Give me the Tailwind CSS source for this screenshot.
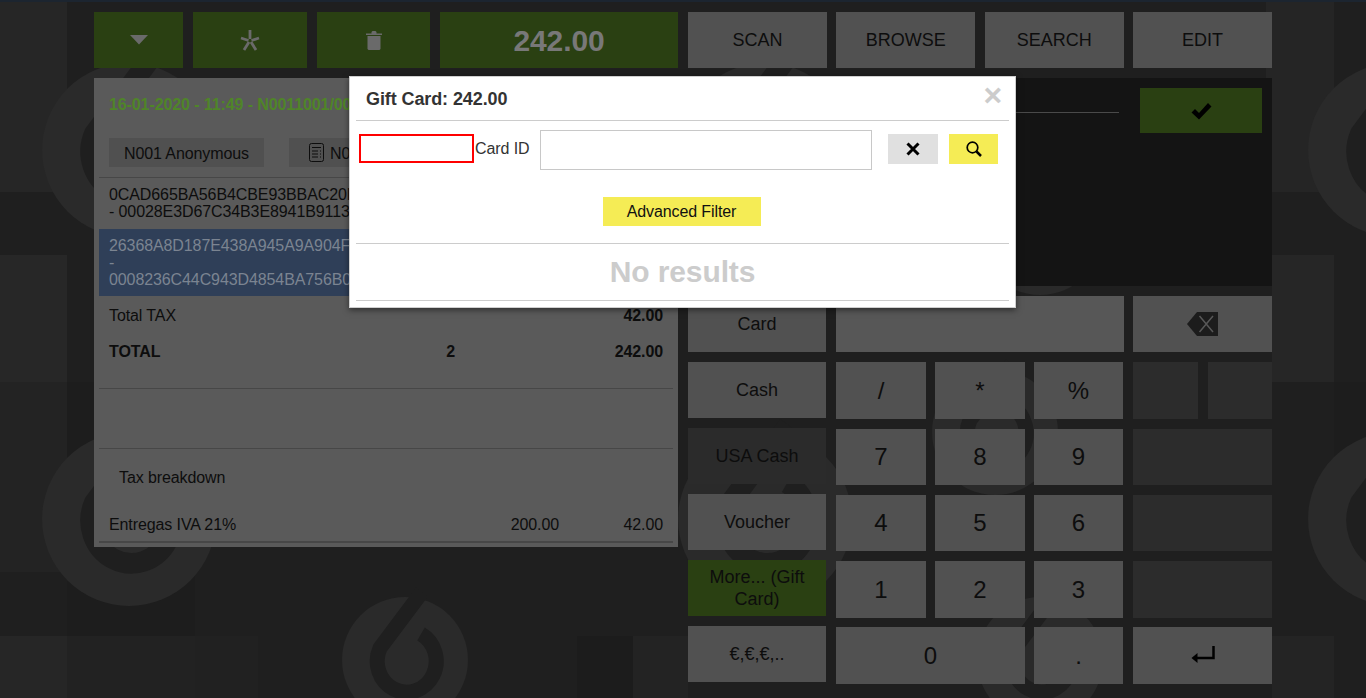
<!DOCTYPE html>
<html lang="en">
  <head>
    <meta charset="UTF-8" />
    <title>Gift Card</title>
    <script src="https://cdn.jsdelivr.net/npm/@tailwindcss/browser@4"></script>
  </head>
  <body class="bg-[#1f1f1f]">
    <div class="relative w-[1366px] h-[698px] overflow-hidden font-['Liberation_Sans',Arial,sans-serif] text-[16px] text-[#0d0d0d]">
      <!-- Background tiles and logos -->
      <svg class="absolute inset-0" width="1366" height="698" viewBox="0 0 1366 698">
        <defs>
          <g id="logo">
            <circle r="63" fill="#2a2a2a" />
            <path d="M17 -68 L-25 -12 A29.5 31 0 1 0 16 -26" fill="none" stroke="#1f1f1f" stroke-width="15" />
          </g>
        </defs>
        <rect width="1366" height="2" fill="#1c2530" />
        <rect x="0" y="2" width="67" height="190" fill="#262626" />
        <rect x="0" y="255" width="67" height="127" fill="#272727" />
        <rect x="0" y="382" width="67" height="190" fill="#232323" />
        <rect x="67" y="382" width="128" height="254" fill="#1d1d1d" />
        <rect x="0" y="636" width="67" height="62" fill="#262626" />
        <rect x="67" y="636" width="128" height="62" fill="#222222" />
        <rect x="195" y="636" width="63" height="62" fill="#212121" />
        <rect x="577" y="636" width="56" height="62" fill="#1c1c1c" />
        <rect x="633" y="636" width="55" height="62" fill="#232323" />
        <rect x="1266" y="2" width="68" height="190" fill="#252525" />
        <rect x="1272" y="255" width="62" height="127" fill="#262626" />
        <rect x="1334" y="382" width="32" height="190" fill="#1d1d1d" />
        <rect x="1272" y="636" width="62" height="62" fill="#242424" />
        <use href="#logo" transform="translate(129 150) scale(1.38)" />
        <use href="#logo" transform="translate(129 519) scale(1.38)" />
        <use href="#logo" transform="translate(765 150) scale(1.38)" />
        <use href="#logo" transform="translate(765 519) scale(1.38)" />
        <use href="#logo" transform="translate(1395 150) scale(1.38)" />
        <use href="#logo" transform="translate(1395 519) scale(1.38)" />
        <use href="#logo" transform="translate(405 660)" />
        <use href="#logo" transform="translate(1040 660)" />
        <use href="#logo" transform="translate(1040 232)" />
        <use href="#logo" transform="translate(995 432)" />
      </svg>

      <main class="relative flex gap-[10px] pl-[94px] pt-[12px]">
        <!-- Ticket column -->
        <section class="w-[584px] tracking-[-0.1px]">
          <div class="flex gap-[10px] h-[56px]">
            <button class="w-[89px] bg-[#2a4012] flex items-center justify-center">
              <svg width="18" height="10" viewBox="0 0 18 10"><path d="M0 0H18L9 9.500Z" fill="#6a6a6a" /></svg>
            </button>
            <button class="w-[114px] bg-[#2a4012] flex items-center justify-center">
              <svg width="20" height="21" viewBox="0 0 20 21" fill="none" stroke="#6a6a6a" stroke-width="2.800"><path d="M10 0V9M8.500 10.500L1 8M11.500 10.500L19 8M9 12L4 20M11 12L16 20" /></svg>
            </button>
            <button class="w-[113px] bg-[#2a4012] flex items-center justify-center">
              <svg width="16" height="19" viewBox="0 0 16 19" fill="#6a6a6a"><path d="M0 2.500H5.500V1L6.500 0H9.500L10.500 1V2.500H16V4H0ZM1.500 5H14.500V18L13.500 19H2.500L1.500 18Z" /></svg>
            </button>
            <button class="w-[238px] text-[30px] font-bold text-[#787878] bg-[#2a4012]">242.00</button>
          </div>

          <div class="mt-[10px] h-[469px] bg-[#5a5a5a] flex flex-col">
            <div class="h-[60px] pl-[15px] pt-[17px] leading-5 font-bold text-[#4f8528] whitespace-nowrap">16-01-2020 - 11:49 - N0011001/00</div>
            <div class="flex gap-[25px] pl-[15px] h-[29px]">
              <button class="w-[155px] pt-[2px] bg-[#505050]">N001 Anonymous</button>
              <button class="w-[60px] pt-[2px] bg-[#505050] flex items-center pl-[20px] gap-[6px] whitespace-nowrap">
                <svg class="shrink-0 -mt-[2px]" width="15" height="19" viewBox="0 0 15 19" fill="none" stroke="#0d0d0d"><rect x="0.500" y="0.500" width="14" height="18" rx="2" /><path d="M3 4.500H12M3 8H9M11 8H12M3 11H9M11 11H12M3 14H9M11 14H12" /></svg>
                <span>N0</span>
              </button>
            </div>
            <div class="mx-[5px] mt-[10px] flex-1 flex flex-col border-t border-[#474747]">
              <div class="h-[51px] px-[10px] py-[8px] leading-[17px] whitespace-nowrap">
                <div>0CAD665BA56B4CBE93BBAC20F</div>
                <div>- 00028E3D67C34B3E8941B9113</div>
              </div>
              <div class="h-[67px] px-[10px] py-[8px] leading-[17px] whitespace-nowrap bg-[#2f3f58] text-[#7b8491]">
                <div>26368A8D187E438A945A9A904F</div>
                <div>-</div>
                <div>0008236C44C943D4854BA756B0</div>
              </div>
              <div class="h-[38px] pt-[2px] px-[10px] flex items-center justify-between">
                <span>Total TAX</span>
                <span class="font-bold">42.00</span>
              </div>
              <div class="h-[34px] pt-[2px] px-[10px] flex items-center font-bold">
                <span class="flex-1">TOTAL</span>
                <span>2</span>
                <span class="w-[208px] text-right">242.00</span>
              </div>
              <div class="h-[61px] mt-[20px] border-t border-b border-[#474747]"></div>
              <div class="h-[56px] pt-[2px] pl-[20px] flex items-center">Tax breakdown</div>
              <div class="h-[36px] pt-[4px] px-[10px] flex items-center">
                <span class="flex-1">Entregas IVA 21%</span>
                <span>200.00</span>
                <span class="w-[104px] text-right">42.00</span>
              </div>
              <div class="h-[2px] bg-[#474747]"></div>
            </div>
          </div>
        </section>

        <!-- Payment column -->
        <section class="w-[584px]">
          <div class="flex gap-[9.33px] h-[56px] text-[18px]">
            <button class="w-[139px] bg-[#515151]">SCAN</button>
            <button class="w-[139px] bg-[#515151]">BROWSE</button>
            <button class="w-[139px] bg-[#515151]">SEARCH</button>
            <button class="w-[139px] bg-[#515151]">EDIT</button>
          </div>

          <div class="relative mt-[10px] h-[208px] bg-[#141414]">
            <div class="absolute left-[0px] top-[34px] w-[431px] border-t border-[#4a4a4a]"></div>
            <button class="absolute left-[452px] top-[10px] w-[122px] h-[45px] bg-[#2a4012] flex items-center justify-center">
              <svg width="21" height="18" viewBox="0 0 21 18"><path d="M0.500 10.500L4 7L8 11L17 1L20.500 4.500L8 17.500Z" fill="#000" /></svg>
            </button>
          </div>

          <div class="mt-[10px] flex gap-[10px]">
            <div class="w-[138px] flex flex-col gap-[10px] text-[18px]">
              <button class="h-[56px] bg-[#515151]">Card</button>
              <button class="h-[56px] bg-[#515151]">Cash</button>
              <button class="h-[56px] bg-[#2b2b2b]">USA Cash</button>
              <button class="h-[56px] bg-[#515151]">Voucher</button>
              <button class="h-[56px] bg-[#2a4012] leading-[22px]">More... (Gift Card)</button>
              <button class="h-[56px] bg-[#515151]">€,€,€,..</button>
            </div>

            <div class="w-[436px] grid grid-cols-[90px_90px_90px_65px_65px] grid-rows-[56px_57px_56px_56px_57px_57px] gap-x-[9px] gap-y-[10px] text-[24px]">
              <div class="col-span-3 bg-[#575757]"></div>
              <button class="col-span-2 bg-[#515151] flex items-center justify-center">
                <svg width="31" height="24" viewBox="0 0 31 24"><path d="M0 12L10 0H31V24H10Z" fill="#1c1c1c" /><path d="M12.500 4L26 20M26 4L12.500 20" stroke="#585858" stroke-width="1.500" /></svg>
              </button>

              <button class="bg-[#515151]">/</button>
              <button class="bg-[#515151]">*</button>
              <button class="bg-[#515151] mr-px">%</button>
              <div class="bg-[#2c2c2c]"></div>
              <div class="bg-[#2c2c2c] ml-px"></div>

              <button class="bg-[#515151]">7</button>
              <button class="bg-[#515151]">8</button>
              <button class="bg-[#515151] mr-px">9</button>
              <div class="col-span-2 bg-[#2c2c2c]"></div>

              <button class="bg-[#515151]">4</button>
              <button class="bg-[#515151]">5</button>
              <button class="bg-[#515151] mr-px">6</button>
              <div class="col-span-2 bg-[#2c2c2c]"></div>

              <button class="bg-[#515151]">1</button>
              <button class="bg-[#515151]">2</button>
              <button class="bg-[#515151] mr-px">3</button>
              <div class="col-span-2 bg-[#2c2c2c]"></div>

              <button class="col-span-2 h-[57px] -mt-px bg-[#515151]">0</button>
              <button class="h-[57px] -mt-px mr-px bg-[#515151]">.</button>
              <button class="col-span-2 h-[57px] -mt-px bg-[#515151] flex items-center justify-center">
                <svg width="24" height="20" viewBox="0 0 24 20" fill="none" stroke="#000" stroke-width="2.500"><path d="M22.500 0V12H3" /><path d="M0.500 12L6.500 7V17Z" fill="#000" stroke="none" /></svg>
              </button>
            </div>
          </div>
        </section>
      </main>

      <!-- Gift card dialog -->
      <div class="absolute left-[349px] top-[76px] w-[667px] h-[232px] bg-white border border-[#cfcfcf] shadow-[0_2px_6px_rgba(0,0,0,0.5)] text-[#333] tracking-[-0.1px]">
        <div class="h-[43px] pl-[16px] pt-[2px] flex items-center text-[18px] font-bold">Gift Card: 242.00</div>
        <button class="absolute right-[13px] top-[1px] text-[32px] leading-[34px] font-bold text-[#cccccc]">×</button>
        <div class="mx-[6px] border-t border-[#cccccc]"></div>

        <div class="flex items-start h-[76px] pt-[9px]">
          <input class="ml-[9px] mt-[4px] w-[115px] h-[29px] border-2 border-[#ff0000] outline-none" />
          <label class="ml-[1px] mt-[9px] w-[65px] leading-[20px]">Card ID</label>
          <input class="w-[332px] h-[40px] border border-[#c8c8c8] outline-none" />
          <button class="ml-[16px] mt-[4px] w-[50px] h-[30px] bg-[#e0e0e0] flex items-center justify-center">
            <svg width="14" height="14" viewBox="0 0 14 14" fill="none" stroke="#000" stroke-width="3"><path d="M1.500 1.500L12.500 12.500M12.500 1.500L1.500 12.500" /></svg>
          </button>
          <button class="ml-[11px] mt-[4px] w-[49px] h-[30px] bg-[#f5ec55] flex items-center justify-center">
            <svg width="16" height="16" viewBox="0 0 16 16" fill="none" stroke="#000"><circle cx="6.500" cy="6.500" r="5.300" stroke-width="1.700" /><path d="M10.500 10.500L15 15" stroke-width="2.500" /></svg>
          </button>
        </div>

        <div class="flex justify-center pr-[2px]">
          <button class="w-[158px] h-[29px] bg-[#f5ec55] text-[#111]">Advanced Filter</button>
        </div>

        <div class="mx-[6px] mt-[17px] border-t border-[#cccccc]"></div>
        <div class="h-[56px] pb-[2px] flex items-center justify-center text-[30px] font-bold text-[#cccccc]">No results</div>
        <div class="mx-[6px] border-t border-[#cccccc]"></div>
      </div>
    </div>
  </body>
</html>
